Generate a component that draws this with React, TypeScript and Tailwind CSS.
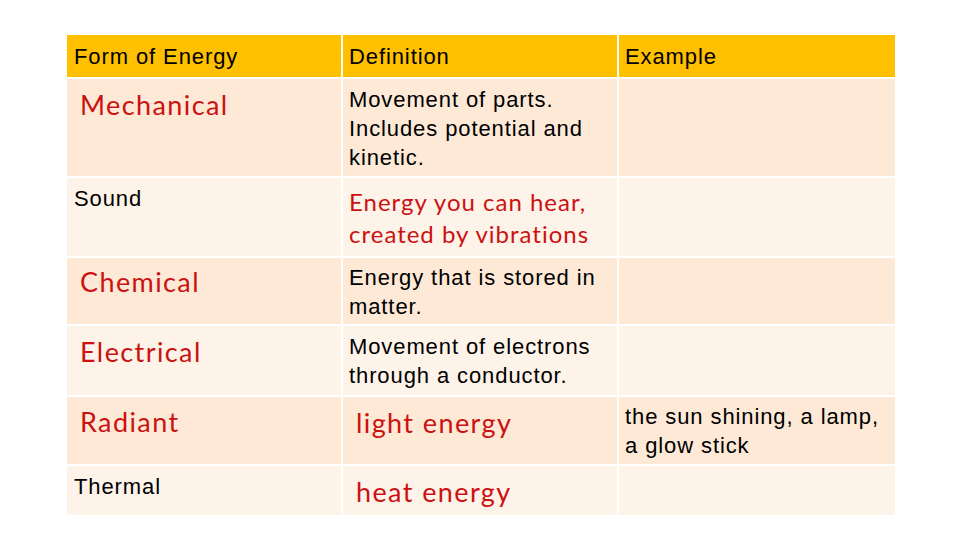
import React from "react";

const arial = "font-['Liberation_Sans',Arial,sans-serif] text-[22px] leading-[29px] tracking-[0.9px] text-black";
const red = "font-['Lato',sans-serif] text-[27px] leading-[32px] tracking-[1.4px] text-[#cc1111]";
const redSm = "font-['Lato',sans-serif] text-[24px] leading-[32px] tracking-[1px] text-[#cc1111]";

export default function App() {
  const odd = "bg-[#fde9d6]";
  const even = "bg-[#fef3e9]";
  return (
    <div className="w-[960px] h-[540px] bg-white relative">
      <div className="pt-[35px] pl-[67px]">
        <div className="grid grid-cols-[274px_274px_276px] grid-rows-[42px_97px_78px_66px_69px_67px_49px] gap-[2px] bg-white w-[828px]">
          {/* header */}
          <div className={`bg-[#ffc000] flex items-center pl-[7px] ${arial}`}>Form of Energy</div>
          <div className={`bg-[#ffc000] flex items-center pl-[6px] ${arial}`}>Definition</div>
          <div className={`bg-[#ffc000] flex items-center pl-[6px] ${arial}`}>Example</div>

          {/* Mechanical */}
          <div className={`${odd} pl-[13px] pt-[10px] ${red}`}>Mechanical</div>
          <div className={`${odd} pl-[6px] pt-[6px] ${arial}`}>
            Movement of parts.<br />Includes potential and<br />kinetic.
          </div>
          <div className={odd}></div>

          {/* Sound */}
          <div className={`${even} pl-[7px] pt-[6px] ${arial}`}>Sound</div>
          <div className={`${even} pl-[6px] pt-[8px] ${redSm}`}>
            Energy you can hear,<br />created by vibrations
          </div>
          <div className={even}></div>

          {/* Chemical */}
          <div className={`${odd} pl-[13px] pt-[8px] ${red}`}>Chemical</div>
          <div className={`${odd} pl-[6px] pt-[5px] ${arial}`}>
            Energy that is stored in<br />matter.
          </div>
          <div className={odd}></div>

          {/* Electrical */}
          <div className={`${even} pl-[13px] pt-[10px] ${red}`}>Electrical</div>
          <div className={`${even} pl-[6px] pt-[6px] ${arial}`}>
            Movement of electrons<br />through a conductor.
          </div>
          <div className={even}></div>

          {/* Radiant */}
          <div className={`${odd} pl-[13px] pt-[9px] ${red}`}>Radiant</div>
          <div className={`${odd} pl-[13px] pt-[10px] ${red}`}>light energy</div>
          <div className={`${odd} pl-[6px] pt-[5px] ${arial}`}>
            the sun shining, a lamp,<br />a glow stick
          </div>

          {/* Thermal */}
          <div className={`${even} pl-[7px] pt-[6px] ${arial}`}>Thermal</div>
          <div className={`${even} pl-[13px] pt-[10px] ${red}`}>heat energy</div>
          <div className={even}></div>
        </div>
      </div>
    </div>
  );
}
